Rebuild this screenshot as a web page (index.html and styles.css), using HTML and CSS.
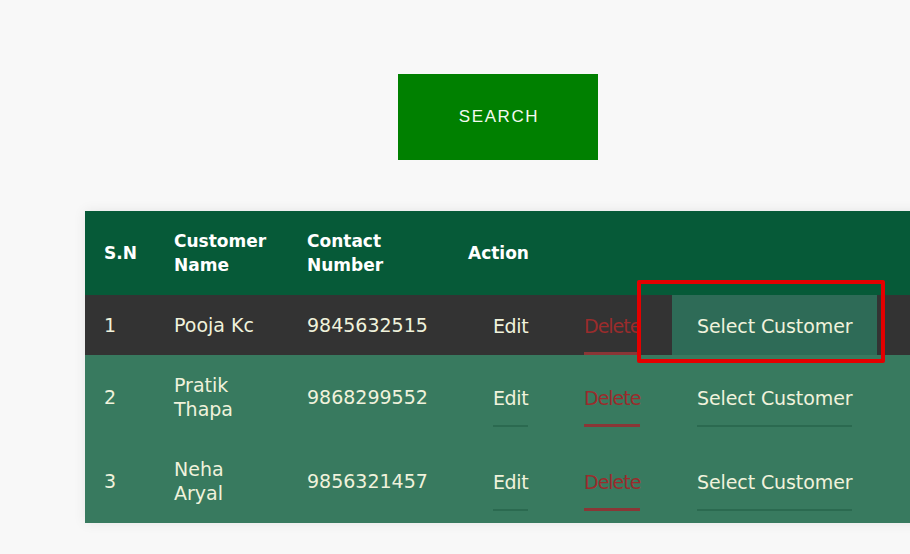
FILE: index.html
```html
<!DOCTYPE html>
<html>
<head>
<meta charset="utf-8">
<link rel="stylesheet" href="styles.css">
</head>
<body>
<div class="page">
  <div class="search-wrap">
    <button class="search-btn">SEARCH</button>
  </div>
  <div class="table-wrap">
    <table class="customers">
      <colgroup>
        <col class="c-sn"><col class="c-name"><col class="c-contact"><col class="c-edit"><col class="c-delete"><col class="c-select">
      </colgroup>
      <thead>
        <tr>
          <th>S.N</th>
          <th>Customer<br>Name</th>
          <th>Contact<br>Number</th>
          <th>Action</th>
          <th></th>
          <th></th>
        </tr>
      </thead>
      <tbody>
        <tr class="row-active">
          <td>1</td>
          <td>Pooja Kc</td>
          <td>9845632515</td>
          <td class="edit-cell"><a class="link link-edit">Edit</a></td>
          <td class="pad-cell"><a class="link link-delete">Delete</a></td>
          <td class="pad-cell"><a class="link link-select is-active">Select Customer</a></td>
        </tr>
        <tr class="row-tall">
          <td>2</td>
          <td>Pratik<br>Thapa</td>
          <td>9868299552</td>
          <td class="edit-cell"><a class="link link-edit">Edit</a></td>
          <td class="pad-cell"><a class="link link-delete">Delete</a></td>
          <td class="pad-cell"><a class="link link-select">Select Customer</a></td>
        </tr>
        <tr class="row-tall">
          <td>3</td>
          <td>Neha<br>Aryal</td>
          <td>9856321457</td>
          <td class="edit-cell"><a class="link link-edit">Edit</a></td>
          <td class="pad-cell"><a class="link link-delete">Delete</a></td>
          <td class="pad-cell"><a class="link link-select">Select Customer</a></td>
        </tr>
      </tbody>
    </table>
    <div class="highlight-box"></div>
  </div>
</div>
</body>
</html>
```

FILE: styles.css
```css
html, body {
  margin: 0;
  padding: 0;
  background: #f8f8f8;
  overflow: hidden;
}

.page {
  width: 910px;
  height: 554px;
  overflow: hidden;
  padding-top: 74px;
  box-sizing: border-box;
}

.search-wrap {
  padding-left: 398px;
}

.search-btn {
  display: block;
  width: 200px;
  height: 86px;
  border: none;
  margin: 0;
  background: #008000;
  color: #f4faf0;
  font-family: "Liberation Sans", Arial, sans-serif;
  font-size: 17px;
  letter-spacing: 1.6px;
  padding: 0 0 0 2px;
}

.table-wrap {
  position: relative;
  margin-top: 51px;
  margin-left: 85px;
  width: 853px;
}

.customers {
  border-collapse: collapse;
  table-layout: fixed;
  width: 853px;
  font-family: "DejaVu Sans", sans-serif;
  font-size: 19px;
  color: #f0f2dc;
  box-shadow: 0 0 12px rgba(0, 0, 0, 0.08);
}

.c-sn { width: 70px; }
.c-name { width: 133px; }
.c-contact { width: 161px; }
.c-edit { width: 116px; }
.c-delete { width: 113px; }
.c-select { width: 260px; }

.customers th {
  background: #065a38;
  color: #ffffff;
  height: 84px;
  padding: 0 0 0 19px;
  text-align: left;
  font-weight: bold;
  font-size: 17px;
  line-height: 24px;
  vertical-align: middle;
}

.customers td {
  padding: 0 0 0 19px;
  line-height: 24px;
  vertical-align: middle;
  text-align: left;
}

.row-active td {
  background: #333333;
  height: 60px;
}

.row-tall td {
  background: #387a5f;
  height: 84px;
}

.customers td.edit-cell {
  padding-left: 44px;
}

.link {
  display: inline-block;
  padding: 19px 0 15px;
  border-bottom: 2px solid #2b6a50;
  line-height: 24px;
  color: #f0f2dc;
  vertical-align: middle;
}

.link-edit {
  letter-spacing: -0.4px;
}

.link-delete {
  color: #9a2c2c;
  border-bottom: 3px solid #8a3636;
  padding-bottom: 14px;
  letter-spacing: -1px;
}

.row-active .link-edit {
  border-bottom-color: #333333;
}

.link-select {
  letter-spacing: -0.1px;
}

.link-select.is-active {
  background: #2e6b57;
  padding-left: 25px;
  padding-right: 25px;
  margin-left: -25px;
  border-bottom-color: #2e6b57;
}

.highlight-box {
  position: absolute;
  left: 552px;
  top: 69px;
  width: 240px;
  height: 75px;
  border: 4px solid #e40000;
  border-radius: 2px;
}
```
